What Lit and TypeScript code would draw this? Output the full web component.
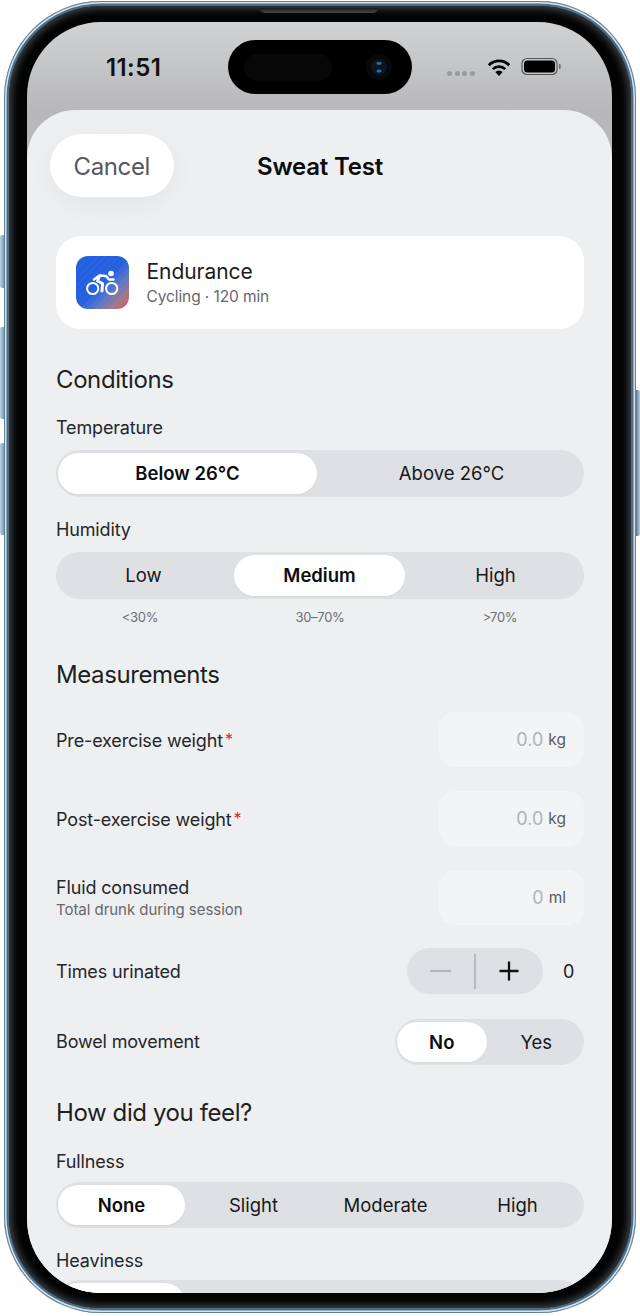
import { LitElement, html, css } from "lit";
import { customElement } from "lit/decorators.js";

@customElement("seg-control")
class SegControl extends LitElement {
  static properties = { options: { type: Array }, active: { type: Number } };
  options: string[] = [];
  active = 0;
  static styles = css`
    :host { display: block; }
    .track { display: flex; height: 46.5px; border-radius: 24px; background: #dfe0e3; }
    .opt { flex: 1 1 0; min-width: 0; margin: 3px 3px 3px 2px; display: flex; align-items: center; justify-content: center; font-size: 18.5px; color: #17181a; border-radius: 21px; }
    .on { background: #fff; font-weight: 600; color: #0c0d0e; box-shadow: 0 1px 2px rgba(0,0,0,.04); }
  `;
  render() {
    return html`<div class="track">${this.options.map((o, i) => html`<div class="opt ${i === this.active ? "on" : ""}">${o}</div>`)}</div>`;
  }
}

@customElement("app-root")
class AppRoot extends LitElement {
  static styles = css`
    :host { display: block; width: 640px; height: 1316px; background: #fff; font-family: Inter, "Noto Sans", sans-serif; overflow: hidden; position: relative; }
    .btn { position: absolute; left: 0; width: 5px; border-radius: 2px 0 0 2px; background: linear-gradient(90deg, #b9d0de, #8fadc2 60%, #5f7c92); }
    .b1 { top: 235px; height: 53px; }
    .b2 { top: 327px; height: 92px; }
    .b3 { top: 443px; height: 92px; }
    .b4 { left: auto; right: 0; top: 390px; height: 146px; width: 5px; border-radius: 0 2px 2px 0; background: linear-gradient(270deg, #b9d0de, #6f8da2 60%, #4b6a80); }
    .frame { position: absolute; left: 4px; top: 1px; width: 632px; height: 1312px; box-sizing: border-box; border-radius: 97px; padding: 5px; background: #4e6c83; box-shadow: inset 0 0 0 1px #5f7f96, inset 0 0 0 2.5px #d7e4ec; }
    .bezel { height: 100%; box-sizing: border-box; border-radius: 92px; padding: 16px 19px 15px 18px; background: #030303; box-shadow: inset 0 0 7px 3px #3a4147; position: relative; }
    .speaker { position: absolute; left: 251px; top: 2px; width: 118px; height: 5px; border-radius: 0 0 7px 7px; background: linear-gradient(180deg, #1a1b1d, #46494c); }
    .screen { height: 100%; border-radius: 74px; overflow: hidden; background: linear-gradient(180deg, #d0d2d4 0, #b8b8ba 88px); display: flex; flex-direction: column; position: relative; }
    .status { flex: 0 0 88px; position: relative; }
    .time { position: absolute; left: 79px; top: 31px; font-size: 24px; line-height: 29px; font-weight: 600; color: #111; letter-spacing: .4px; }
    .island { position: absolute; left: 201px; top: 18px; width: 184px; height: 54px; border-radius: 27px; background: #000; }
    .face { position: absolute; left: 16px; top: 14px; width: 88px; height: 27px; border-radius: 14px; background: #070707; }
    .lens { position: absolute; left: 137px; top: 13px; }
    .dots { position: absolute; left: 420px; top: 49px; display: flex; gap: 2.5px; }
    .dots i { width: 5px; height: 5px; border-radius: 50%; background: #98999b; }
    .wifi { position: absolute; left: 459px; top: 35px; }
    .batt { position: absolute; left: 494px; top: 35px; }
    .sheet { flex: 1; background: #eeeff1; border-radius: 48px 48px 0 0; padding: 24px 28px 0 29px; box-sizing: border-box; overflow: hidden; min-height: 0; }
    .head { position: relative; height: 63px; display: flex; align-items: center; justify-content: center; margin: 0 0 39px; }
    .cancel { position: absolute; left: -6px; top: 0; width: 123.5px; height: 63px; box-sizing: border-box; padding-top: 2px; border-radius: 32px; background: #fff; color: #56585c; font-size: 24px; letter-spacing: -.4px; display: flex; align-items: center; justify-content: center; box-shadow: 0 8px 26px rgba(0,0,0,.045); }
    .title { font-size: 24px; font-weight: 600; color: #0b0c0d; letter-spacing: -.2px; padding-top: 2px; }
    .card { display: flex; align-items: center; gap: 17.5px; height: 93px; box-sizing: border-box; padding: 0 20px; border-radius: 25px; background: #fff; margin-bottom: 35px; }
    .icon { width: 53px; height: 53px; border-radius: 12px; background:
        repeating-linear-gradient(135deg, rgba(255,255,255,.025) 0 2px, rgba(255,255,255,0) 2px 5px),
        linear-gradient(135deg, #2360e0 0, #2360e0 50%, #5d78c8 68%, #a8777f 85%, #e84a5f 100%);
      display: flex; align-items: center; justify-content: center; flex: none; }
    .c1 { font-size: 21px; line-height: 26px; color: #1b1c1e; letter-spacing: -.05px; }
    .c2 { font-size: 15.5px; line-height: 20px; color: #66686c; margin-top: 2px; letter-spacing: -.1px; }
    h2 { margin: 0; font-size: 24px; font-weight: 400; line-height: 32px; color: #1e1f21; letter-spacing: -.4px; }
    .lab { font-size: 18px; line-height: 24px; color: #25262a; letter-spacing: -.15px; }
    .mt1 { margin-top: 20px; margin-bottom: 10px; }
    .mt2 { margin-top: 21.5px; margin-bottom: 10px; }
    .hints { display: flex; margin: 9.5px -6px 0; height: 18px; font-size: 13px; line-height: 18px; color: #6d6f73; letter-spacing: -.3px; }
    .hints span { flex: 1; text-align: center; }
    .measure { margin-top: 33px; margin-bottom: 21px; }
    .row { display: flex; align-items: center; justify-content: space-between; height: 55px; margin-bottom: 24px; }
    .row.last { margin-bottom: 23px; }
    .req { color: #e0243c; font-size: 16px; margin-left: 2px; vertical-align: 2px; }
    .field { width: 145px; height: 55px; box-sizing: border-box; border-radius: 16px; background: #f3f4f6; display: flex; align-items: center; justify-content: flex-end; gap: 5px; padding-right: 18px; font-size: 18px; color: #b1b2b6; }
    .unit { font-size: 15.5px; color: #5a5c60; }
    .sub { font-size: 15px; line-height: 20px; color: #66686c; letter-spacing: -.04px; }
    .row2 { display: flex; align-items: center; justify-content: space-between; height: 46.5px; margin-bottom: 24px; }
    .row2.tight { margin-bottom: 0; }
    .nudge { margin-top: 2px; }
    .step { display: flex; align-items: center; gap: 20px; margin-right: 10px; }
    .stepper { width: 136px; height: 46px; border-radius: 24px; background: #dfe0e3; display: flex; align-items: center; }
    .stepper div { flex: 1; display: flex; align-items: center; justify-content: center; }
    .stepper .sep { flex: none; width: 1.5px; height: 35px; background: #b9babd; }
    .val { font-size: 18px; color: #1a1b1d; width: 11px; text-align: right; }
    .yn { width: 189px; }
    .feel { margin-top: 32px; margin-bottom: 21px; }
    .mb { margin-bottom: 7.5px; }
    .lab2 { margin-top: 21px; margin-bottom: 7px; }
  `;

  render() {
    return html`
      <div class="btn b1"></div><div class="btn b2"></div><div class="btn b3"></div><div class="btn b4"></div>
      <div class="frame"><div class="bezel"><div class="speaker"></div><div class="screen">
        <div class="status">
          <div class="time">11:51</div>
          <div class="island">
            <div class="face"></div>
            <svg class="lens" width="28" height="28" viewBox="0 0 28 28">
              <circle cx="14" cy="14" r="13" fill="#06080a"/>
              <circle cx="14" cy="14" r="8" fill="#0c1620"/>
              <ellipse cx="14" cy="10.3" rx="2.6" ry="1.6" fill="#2a6ea6"/>
              <ellipse cx="14" cy="18" rx="2.6" ry="1.6" fill="#2a6ea6"/>
            </svg>
          </div>
          <div class="dots"><i></i><i></i><i></i><i></i></div>
          <svg class="wifi" width="26" height="20" viewBox="0 0 26 20">
            <path d="M13 19 9.3 15a5.3 5.3 0 0 1 7.4 0Z" fill="#000"/>
            <path d="M6.8 12.2a8.8 8.8 0 0 1 12.4 0" fill="none" stroke="#000" stroke-width="2.6"/>
            <path d="M2.8 8.2a14.4 14.4 0 0 1 20.4 0" fill="none" stroke="#000" stroke-width="2.8"/>
          </svg>
          <svg class="batt" width="42" height="20" viewBox="0 0 42 20">
            <rect x="1" y="1.5" width="35" height="16" rx="5" fill="none" stroke="#555" stroke-width="1.2"/>
            <rect x="3" y="3.5" width="31" height="12" rx="3.5" fill="#000"/>
            <rect x="38" y="7" width="1.6" height="5" rx=".8" fill="#666"/>
          </svg>
        </div>
        <div class="sheet">
          <div class="head"><div class="cancel">Cancel</div><div class="title">Sweat Test</div></div>
          <div class="card">
            <div class="icon">
              <svg width="37" height="30" viewBox="0 0 37 30" fill="none">
                <circle cx="8.7" cy="20.5" r="5.6" stroke="#fff" stroke-width="2"/>
                <circle cx="27.7" cy="20.5" r="5.6" stroke="#fff" stroke-width="2"/>
                <circle cx="27" cy="5.5" r="2.8" fill="#fff"/>
                <path d="M10 11.5 15.5 7.5 22 8 25 11.5 29.5 11.5" stroke="#fff" stroke-width="2.6" stroke-linecap="round" stroke-linejoin="round"/>
                <path d="M15.5 8 13.5 13 18.5 15.5 18 23" stroke="#fff" stroke-width="3" stroke-linecap="round" stroke-linejoin="round"/>
              </svg>
            </div>
            <div><div class="c1">Endurance</div><div class="c2">Cycling · 120 min</div></div>
          </div>
          <h2>Conditions</h2>
          <div class="lab mt1">Temperature</div>
          <seg-control .options=${["Below 26°C", "Above 26°C"]} .active=${0}></seg-control>
          <div class="lab mt2">Humidity</div>
          <seg-control .options=${["Low", "Medium", "High"]} .active=${1}></seg-control>
          <div class="hints"><span>&lt;30%</span><span>30–70%</span><span>&gt;70%</span></div>
          <h2 class="measure">Measurements</h2>
          <div class="row"><div class="lab">Pre-exercise weight<span class="req">*</span></div><div class="field">0.0 <span class="unit">kg</span></div></div>
          <div class="row"><div class="lab">Post-exercise weight<span class="req">*</span></div><div class="field">0.0 <span class="unit">kg</span></div></div>
          <div class="row last"><div><div class="lab">Fluid consumed</div><div class="sub">Total drunk during session</div></div><div class="field">0 <span class="unit">ml</span></div></div>
          <div class="row2"><div class="lab nudge">Times urinated</div>
            <div class="step"><div class="stepper">
              <div><svg width="21" height="20" viewBox="0 0 21 20"><path d="M0 10H21" stroke="#b4b5b8" stroke-width="2.2"/></svg></div>
              <div class="sep"></div>
              <div><svg width="20" height="20" viewBox="0 0 20 20"><path d="M0.5 10H19.5M10 0.5V19.5" stroke="#111" stroke-width="2.3"/></svg></div>
            </div><div class="val">0</div></div>
          </div>
          <div class="row2 tight"><div class="lab">Bowel movement</div><seg-control class="yn" .options=${["No", "Yes"]} .active=${0}></seg-control></div>
          <h2 class="feel">How did you feel?</h2>
          <div class="lab mb">Fullness</div>
          <seg-control .options=${["None", "Slight", "Moderate", "High"]} .active=${0}></seg-control>
          <div class="lab lab2">Heaviness</div>
          <seg-control .options=${["None", "Slight", "Moderate", "High"]} .active=${0}></seg-control>
        </div>
      </div></div></div>
    `;
  }
}
